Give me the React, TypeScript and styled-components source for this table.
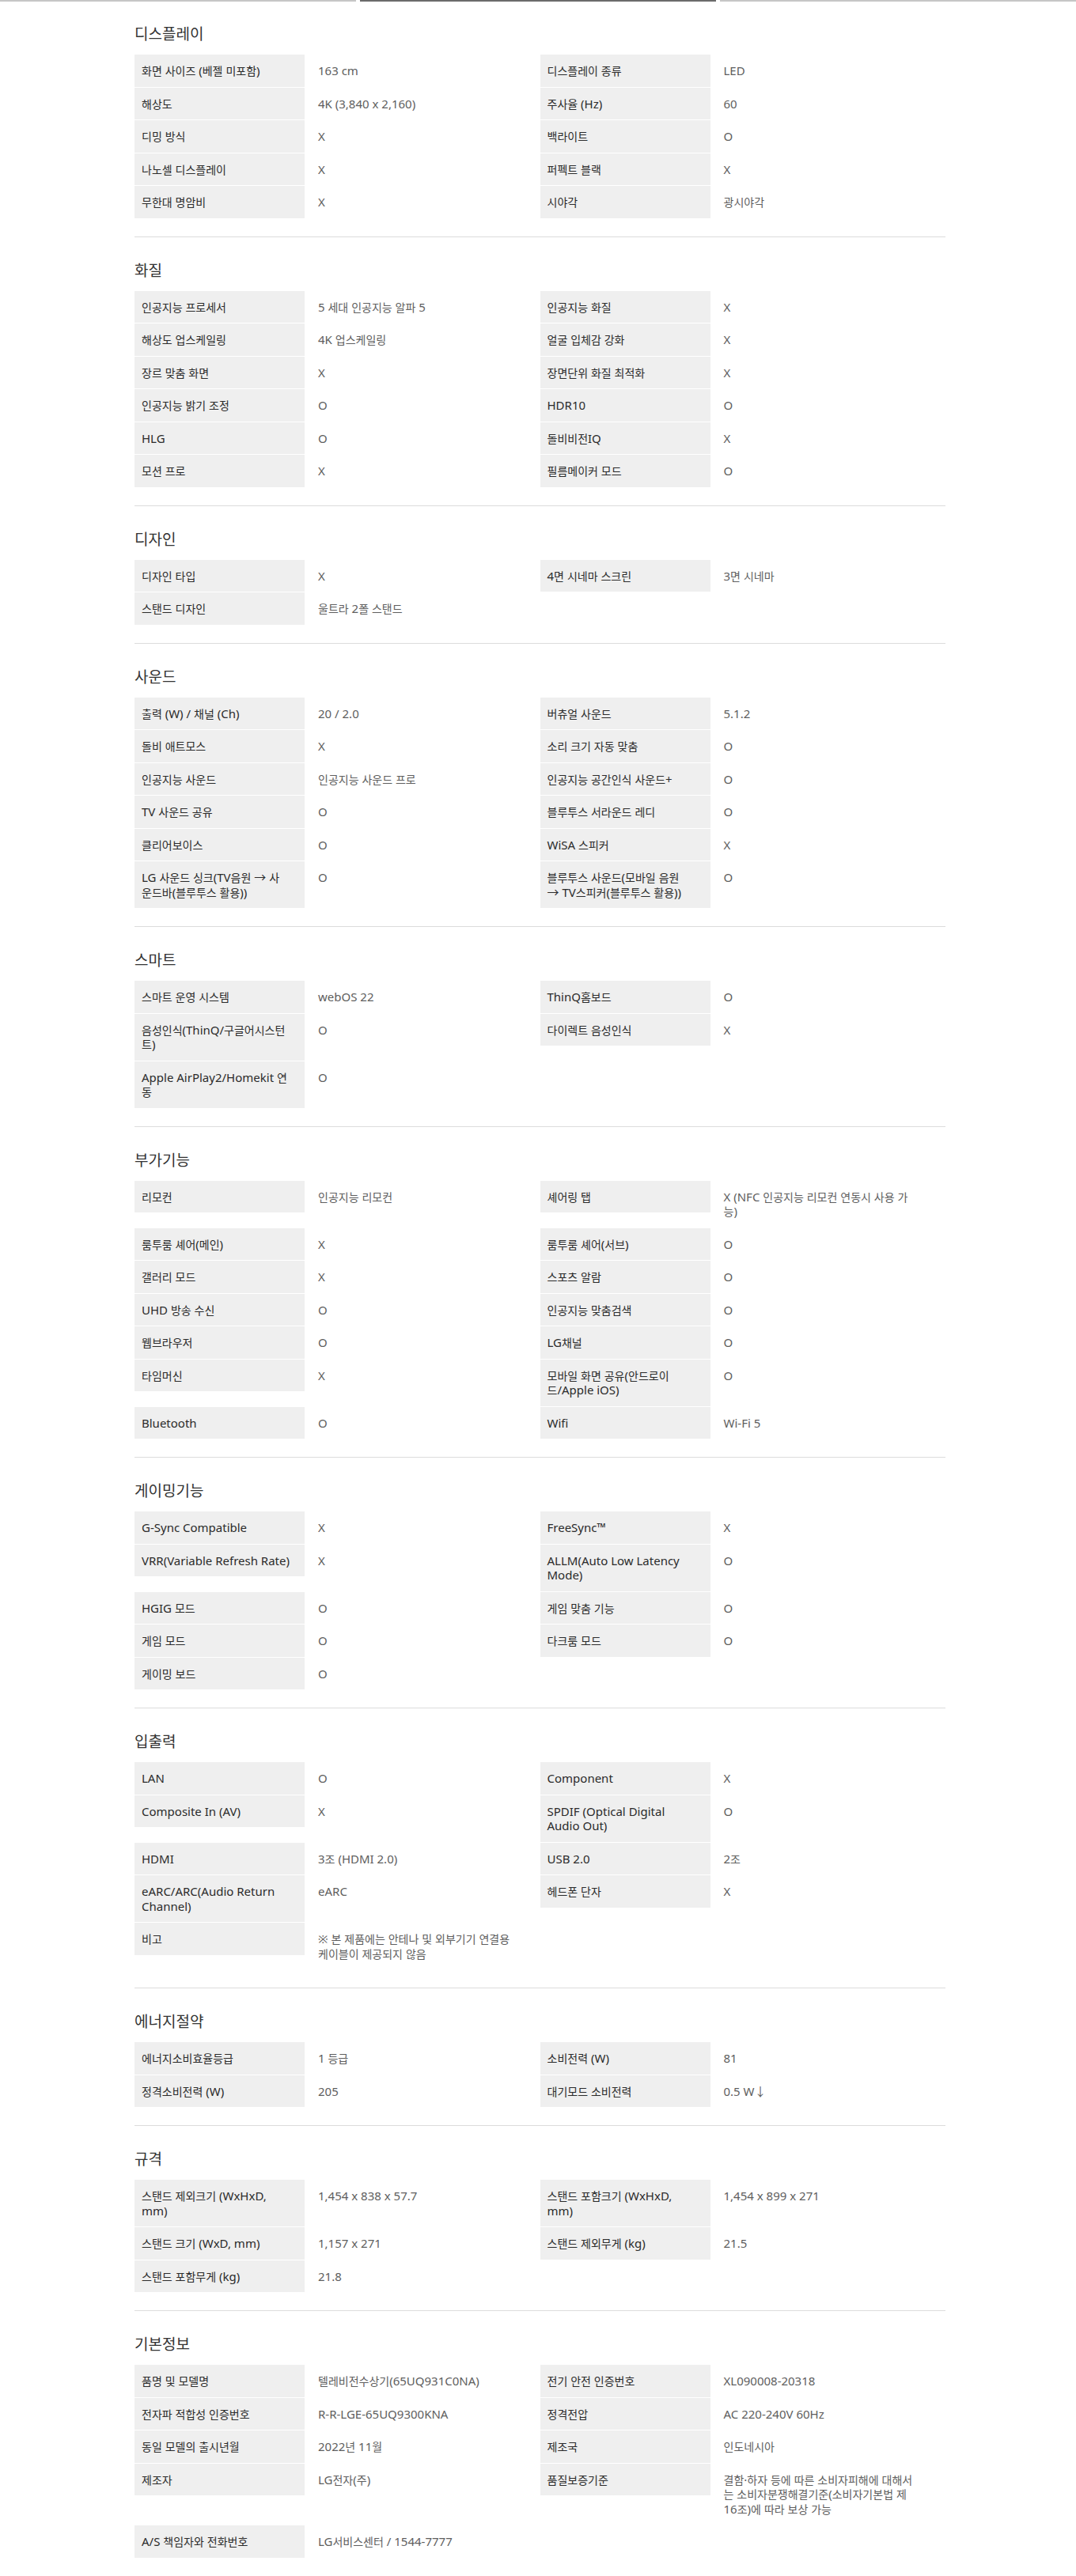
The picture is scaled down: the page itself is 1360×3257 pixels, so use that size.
import React from "react";
import styled, { createGlobalStyle } from "styled-components";

const GlobalStyle = createGlobalStyle`
  html, body {
    margin: 0;
    padding: 0;
    background: #ffffff;
  }
  body {
    font-family: "Noto Sans", "Noto Sans CJK KR", sans-serif;
    -webkit-font-smoothing: antialiased;
  }
`;

const TabBar = styled.div`
  display: flex;
  gap: 5px;
  height: 2px;
`;

const TabLine = styled.div<{ $active?: boolean }>`
  flex: 1;
  background: ${(p) => (p.$active ? "#6b6b6b" : "#c6c6c6")};
`;

const Container = styled.main`
  width: 1025px;
  margin-left: 170px;
`;

const Section = styled.section`
  padding: 27px 0 23px;
  border-bottom: 1px solid #dcdcdc;

  &:first-of-type {
    padding-top: 26px;
  }
`;

const Title = styled.h3`
  margin: 0 0 13px;
  font-family: "Noto Sans CJK KR", sans-serif;
  font-size: 19px;
  line-height: 28px;
  font-weight: 400;
  color: #333333;
`;

const SpecGrid = styled.dl`
  display: grid;
  grid-template-columns: 1fr 1fr;
  row-gap: 1px;
  margin: 0;
`;

const SpecItem = styled.div`
  display: flex;
  align-items: flex-start;
  min-width: 0;
`;

const Label = styled.dt`
  flex: 0 0 215px;
  box-sizing: border-box;
  padding: 11px 8px 11px 9px;
  background: #efefef;
  font-size: 15px;
  line-height: 18.5px;
  color: #2b2b2b;
`;

const Value = styled.dd`
  flex: 1;
  min-width: 0;
  margin: 0;
  box-sizing: border-box;
  padding: 11px 8px 11px 17px;
  font-size: 15px;
  line-height: 18.5px;
  color: #5e5e5e;
`;

const Hangul = styled.span`
  font-family: "Noto Sans CJK KR", sans-serif;
  font-size: 14px;
`;

const HANGUL_RUN = /([\u1100-\u11FF\u3130-\u318F\uAC00-\uD7AF]+)/;

function Text({ children }: { children: string }) {
  const lines = children.split("\n");
  return (
    <>
      {lines.map((line, li) => (
        <React.Fragment key={li}>
          {li > 0 && <br />}
          {line.split(HANGUL_RUN).map((part, i) =>
            i % 2 === 1 ? (
              <Hangul key={i}>{part}</Hangul>
            ) : (
              <React.Fragment key={i}>{part}</React.Fragment>
            )
          )}
        </React.Fragment>
      ))}
    </>
  );
}

type Spec = [string, string];
type SectionData = { title: string; items: Spec[] };

const sections: SectionData[] = [
  {
    title: "디스플레이",
    items: [
      ["화면 사이즈 (베젤 미포함)", "163 cm"],
      ["디스플레이 종류", "LED"],
      ["해상도", "4K (3,840 x 2,160)"],
      ["주사율 (Hz)", "60"],
      ["디밍 방식", "X"],
      ["백라이트", "O"],
      ["나노셀 디스플레이", "X"],
      ["퍼펙트 블랙", "X"],
      ["무한대 명암비", "X"],
      ["시야각", "광시야각"],
    ],
  },
  {
    title: "화질",
    items: [
      ["인공지능 프로세서", "5 세대 인공지능 알파 5"],
      ["인공지능 화질", "X"],
      ["해상도 업스케일링", "4K 업스케일링"],
      ["얼굴 입체감 강화", "X"],
      ["장르 맞춤 화면", "X"],
      ["장면단위 화질 최적화", "X"],
      ["인공지능 밝기 조정", "O"],
      ["HDR10", "O"],
      ["HLG", "O"],
      ["돌비비전IQ", "X"],
      ["모션 프로", "X"],
      ["필름메이커 모드", "O"],
    ],
  },
  {
    title: "디자인",
    items: [
      ["디자인 타입", "X"],
      ["4면 시네마 스크린", "3면 시네마"],
      ["스탠드 디자인", "울트라 2폴 스탠드"],
    ],
  },
  {
    title: "사운드",
    items: [
      ["출력 (W) / 채널 (Ch)", "20 / 2.0"],
      ["버츄얼 사운드", "5.1.2"],
      ["돌비 애트모스", "X"],
      ["소리 크기 자동 맞춤", "O"],
      ["인공지능 사운드", "인공지능 사운드 프로"],
      ["인공지능 공간인식 사운드+", "O"],
      ["TV 사운드 공유", "O"],
      ["블루투스 서라운드 레디", "O"],
      ["클리어보이스", "O"],
      ["WiSA 스피커", "X"],
      ["LG 사운드 싱크(TV음원 → 사\n운드바(블루투스 활용))", "O"],
      ["블루투스 사운드(모바일 음원\n→ TV스피커(블루투스 활용))", "O"],
    ],
  },
  {
    title: "스마트",
    items: [
      ["스마트 운영 시스템", "webOS 22"],
      ["ThinQ홈보드", "O"],
      ["음성인식(ThinQ/구글어시스턴\n트)", "O"],
      ["다이렉트 음성인식", "X"],
      ["Apple AirPlay2/Homekit 연\n동", "O"],
    ],
  },
  {
    title: "부가기능",
    items: [
      ["리모컨", "인공지능 리모컨"],
      ["셰어링 탭", "X (NFC 인공지능 리모컨 연동시 사용 가\n능)"],
      ["룸투룸 셰어(메인)", "X"],
      ["룸투룸 셰어(서브)", "O"],
      ["갤러리 모드", "X"],
      ["스포츠 알람", "O"],
      ["UHD 방송 수신", "O"],
      ["인공지능 맞춤검색", "O"],
      ["웹브라우저", "O"],
      ["LG채널", "O"],
      ["타임머신", "X"],
      ["모바일 화면 공유(안드로이\n드/Apple iOS)", "O"],
      ["Bluetooth", "O"],
      ["Wifi", "Wi-Fi 5"],
    ],
  },
  {
    title: "게이밍기능",
    items: [
      ["G-Sync Compatible", "X"],
      ["FreeSync™", "X"],
      ["VRR(Variable Refresh Rate)", "X"],
      ["ALLM(Auto Low Latency\nMode)", "O"],
      ["HGIG 모드", "O"],
      ["게임 맞춤 기능", "O"],
      ["게임 모드", "O"],
      ["다크룸 모드", "O"],
      ["게이밍 보드", "O"],
    ],
  },
  {
    title: "입출력",
    items: [
      ["LAN", "O"],
      ["Component", "X"],
      ["Composite In (AV)", "X"],
      ["SPDIF (Optical Digital\nAudio Out)", "O"],
      ["HDMI", "3조 (HDMI 2.0)"],
      ["USB 2.0", "2조"],
      ["eARC/ARC(Audio Return\nChannel)", "eARC"],
      ["헤드폰 단자", "X"],
      ["비고", "※ 본 제품에는 안테나 및 외부기기 연결용\n케이블이 제공되지 않음"],
    ],
  },
  {
    title: "에너지절약",
    items: [
      ["에너지소비효율등급", "1 등급"],
      ["소비전력 (W)", "81"],
      ["정격소비전력 (W)", "205"],
      ["대기모드 소비전력", "0.5 W↓"],
    ],
  },
  {
    title: "규격",
    items: [
      ["스탠드 제외크기 (WxHxD,\nmm)", "1,454 x 838 x 57.7"],
      ["스탠드 포함크기 (WxHxD,\nmm)", "1,454 x 899 x 271"],
      ["스탠드 크기 (WxD, mm)", "1,157 x 271"],
      ["스탠드 제외무게 (kg)", "21.5"],
      ["스탠드 포함무게 (kg)", "21.8"],
    ],
  },
  {
    title: "기본정보",
    items: [
      ["품명 및 모델명", "텔레비전수상기(65UQ931C0NA)"],
      ["전기 안전 인증번호", "XL090008-20318"],
      ["전자파 적합성 인증번호", "R-R-LGE-65UQ9300KNA"],
      ["정격전압", "AC 220-240V 60Hz"],
      ["동일 모델의 출시년월", "2022년 11월"],
      ["제조국", "인도네시아"],
      ["제조자", "LG전자(주)"],
      [
        "품질보증기준",
        "결함·하자 등에 따른 소비자피해에 대해서\n는 소비자분쟁해결기준(소비자기본법 제\n16조)에 따라 보상 가능",
      ],
      ["A/S 책임자와 전화번호", "LG서비스센터 / 1544-7777"],
    ],
  },
];

export default function App() {
  return (
    <>
      <GlobalStyle />
      <TabBar>
        <TabLine />
        <TabLine $active />
        <TabLine />
      </TabBar>
      <Container>
        {sections.map((s) => (
          <Section key={s.title}>
            <Title>{s.title}</Title>
            <SpecGrid>
              {s.items.map(([label, value], i) => (
                <SpecItem key={i}>
                  <Label>
                    <Text>{label}</Text>
                  </Label>
                  <Value>
                    <Text>{value}</Text>
                  </Value>
                </SpecItem>
              ))}
            </SpecGrid>
          </Section>
        ))}
      </Container>
    </>
  );
}
